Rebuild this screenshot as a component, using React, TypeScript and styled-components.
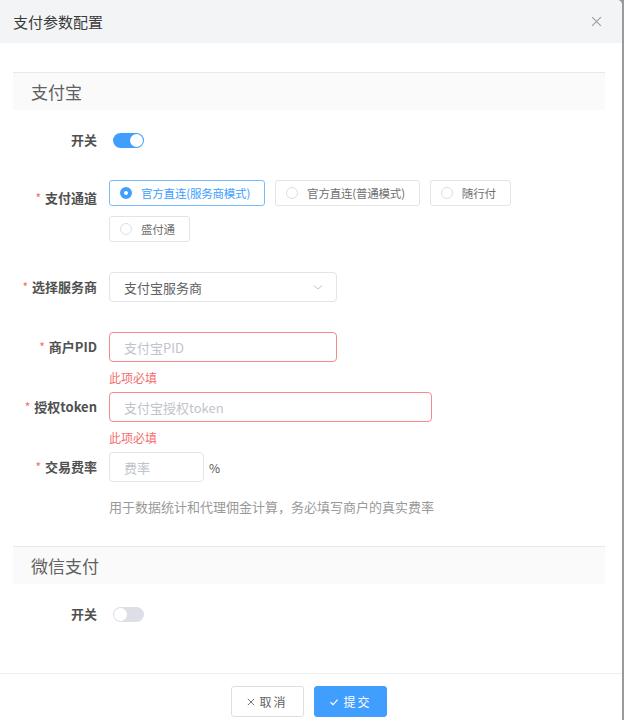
import React from "react";
import styled, { createGlobalStyle } from "styled-components";

const Global = createGlobalStyle`
  html, body { margin: 0; padding: 0; }
  body {
    background: #9a9a9a;
    font-family: "Noto Sans CJK SC", "Noto Sans", sans-serif;
    overflow: hidden;
  }
  * { box-sizing: border-box; }
`;

const Dialog = styled.div`
  width: 622px;
  height: 720px;
  background: #fff;
  border-top-right-radius: 5px;
  overflow: hidden;
  display: flex;
  flex-direction: column;
`;

const Header = styled.div`
  height: 43px;
  flex-shrink: 0;
  background: #f3f4f6;
  display: flex;
  align-items: center;
  justify-content: space-between;
  padding: 0 20px 0 13px;
`;

const Title = styled.div`
  font-size: 15px;
  font-weight: 400;
  color: #3a3a3a;
  line-height: 1;
`;

const Close = styled.button`
  border: 0;
  background: none;
  padding: 0;
  display: flex;
  color: #a0a0a0;
  cursor: pointer;
`;

const Body = styled.div`
  padding: 29px 17px 0 13px;
  flex: 1;
`;

const SectionHead = styled.div<{ $mt?: number }>`
  margin-top: ${(p) => p.$mt ?? 0}px;
  height: 38px;
  border-top: 1px solid #e8e8e8;
  background: #fafafa;
  display: flex;
  align-items: center;
  padding-left: 18px;
  font-size: 17px;
  color: #606060;
`;

const Item = styled.div<{ $mt: number }>`
  display: grid;
  grid-template-columns: 84px 1fr;
  column-gap: 12px;
  margin-top: ${(p) => p.$mt}px;
  align-items: start;
`;

const Label = styled.div<{ $req?: boolean; $pt?: number }>`
  text-align: right;
  font-size: 13px;
  font-weight: 600;
  color: #505050;
  line-height: 30px;
  padding-top: ${(p) => p.$pt ?? 0}px;
  white-space: nowrap;
  &::before {
    content: ${(p) => (p.$req ? '"*"' : '""')};
    color: #f56c6c;
    font-weight: 400;
    margin-right: 4px;
    font-size: 12px;
  }
`;

const Content = styled.div`
  display: flex;
  flex-direction: column;
  align-items: flex-start;
`;

const InlineRow = styled.div`
  display: flex;
  align-items: center;
  gap: 5px;
  height: 30px;
`;

const SwitchBox = styled.div`
  height: 30px;
  display: flex;
  align-items: center;
  padding-left: 4px;
`;

const Switch = styled.span<{ $on: boolean }>`
  width: 31px;
  height: 15px;
  border-radius: 8px;
  background: ${(p) => (p.$on ? "#409eff" : "#dcdfe6")};
  position: relative;
  display: inline-block;
  &::after {
    content: "";
    position: absolute;
    top: 1px;
    left: ${(p) => (p.$on ? "17px" : "1px")};
    width: 13px;
    height: 13px;
    border-radius: 50%;
    background: #fff;
  }
`;

const RadioGroup = styled.div`
  display: flex;
  flex-wrap: wrap;
  gap: 10px;
  width: 420px;
`;

const RadioBtn = styled.div<{ $on?: boolean }>`
  height: 26px;
  display: flex;
  align-items: center;
  gap: 9px;
  padding: 0 14px 0 10px;
  border: 1px solid ${(p) => (p.$on ? "#79bbff" : "#e2e4ea")};
  border-radius: 3px;
  font-size: 11.5px;
  letter-spacing: -0.2px;
  color: ${(p) => (p.$on ? "#409eff" : "#707070")};
  white-space: nowrap;
`;

const Dot = styled.span<{ $on?: boolean }>`
  width: 12px;
  height: 12px;
  border-radius: 50%;
  border: ${(p) => (p.$on ? "4px solid #409eff" : "1px solid #dcdfe6")};
  background: #fff;
  flex-shrink: 0;
`;

const Field = styled.div<{ $w: number; $err?: boolean }>`
  width: ${(p) => p.$w}px;
  height: 30px;
  border: 1px solid ${(p) => (p.$err ? "#f78989" : "#e2e4ea")};
  border-radius: 4px;
  display: flex;
  align-items: center;
  justify-content: space-between;
  padding: 0 12px 0 14px;
  font-size: 13px;
`;

const Placeholder = styled.span`
  color: #c0c4cc;
`;

const Value = styled.span`
  color: #606266;
`;

const ErrorText = styled.div`
  height: 30px;
  padding-top: 8px;
  font-size: 12px;
  line-height: 16px;
  color: #f56c6c;
`;

const Suffix = styled.span`
  font-size: 12px;
  color: #555;
`;

const Help = styled.div`
  margin-top: 15px;
  margin-left: 96px;
  font-size: 13px;
  line-height: 20px;
  color: #9a9a9a;
`;

const Footer = styled.div`
  flex-shrink: 0;
  height: 47px;
  border-top: 1px solid #ebeef5;
  display: flex;
  justify-content: center;
  align-items: flex-start;
  gap: 10px;
  padding-top: 12px;
  padding-right: 4px;
`;

const Btn = styled.button<{ $primary?: boolean }>`
  width: 73px;
  height: 31px;
  border-radius: 3px;
  border: 1px solid ${(p) => (p.$primary ? "#409eff" : "#dcdfe6")};
  background: ${(p) => (p.$primary ? "#409eff" : "#fff")};
  color: ${(p) => (p.$primary ? "#fff" : "#606266")};
  font-family: inherit;
  font-size: 12px;
  letter-spacing: 2px;
  display: flex;
  align-items: center;
  justify-content: center;
  gap: 4px;
  padding: 0;
`;

const Check = () => (
  <svg width="10" height="10" viewBox="0 0 10 10" fill="none" stroke="currentColor" strokeWidth="1.2">
    <path d="M1.5 5.2 L4 7.6 L8.7 2.6" />
  </svg>
);

const Cross = ({ s = 8 }: { s?: number }) => (
  <svg width={s} height={s} viewBox="0 0 10 10" fill="none" stroke="currentColor" strokeWidth="1.1">
    <path d="M1 1 L9 9 M9 1 L1 9" />
  </svg>
);

const Chevron = () => (
  <svg width="12" height="12" viewBox="0 0 12 12" fill="none" stroke="#c0c4cc" strokeWidth="1">
    <path d="M2 4.5 L6 8 L10 4.5" />
  </svg>
);

export default function App() {
  return (
    <>
      <Global />
      <Dialog>
        <Header>
          <Title>支付参数配置</Title>
          <Close aria-label="close">
            <Cross s={11} />
          </Close>
        </Header>
        <Body>
          <SectionHead>支付宝</SectionHead>

          <Item $mt={15}>
            <Label>开关</Label>
            <SwitchBox>
              <Switch $on />
            </SwitchBox>
          </Item>

          <Item $mt={25}>
            <Label $req $pt={3}>支付通道</Label>
            <RadioGroup>
              <RadioBtn $on>
                <Dot $on />
                官方直连(服务商模式)
              </RadioBtn>
              <RadioBtn>
                <Dot />
                官方直连(普通模式)
              </RadioBtn>
              <RadioBtn>
                <Dot />
                随行付
              </RadioBtn>
              <RadioBtn>
                <Dot />
                盛付通
              </RadioBtn>
            </RadioGroup>
          </Item>

          <Item $mt={30}>
            <Label $req>选择服务商</Label>
            <Content>
              <Field $w={228}>
                <Value>支付宝服务商</Value>
                <Chevron />
              </Field>
            </Content>
          </Item>

          <Item $mt={30}>
            <Label $req>商户PID</Label>
            <Content>
              <Field $w={228} $err>
                <Placeholder>支付宝PID</Placeholder>
              </Field>
              <ErrorText>此项必填</ErrorText>
            </Content>
          </Item>

          <Item $mt={0}>
            <Label $req>授权token</Label>
            <Content>
              <Field $w={323} $err>
                <Placeholder>支付宝授权token</Placeholder>
              </Field>
              <ErrorText>此项必填</ErrorText>
            </Content>
          </Item>

          <Item $mt={0}>
            <Label $req>交易费率</Label>
            <InlineRow>
              <Field $w={95}>
                <Placeholder>费率</Placeholder>
              </Field>
              <Suffix>%</Suffix>
            </InlineRow>
          </Item>

          <Help>用于数据统计和代理佣金计算，务必填写商户的真实费率</Help>

          <SectionHead $mt={29}>微信支付</SectionHead>

          <Item $mt={15}>
            <Label>开关</Label>
            <SwitchBox>
              <Switch $on={false} />
            </SwitchBox>
          </Item>
        </Body>
        <Footer>
          <Btn>
            <Cross /> 取消
          </Btn>
          <Btn $primary>
            <Check /> 提交
          </Btn>
        </Footer>
      </Dialog>
    </>
  );
}
